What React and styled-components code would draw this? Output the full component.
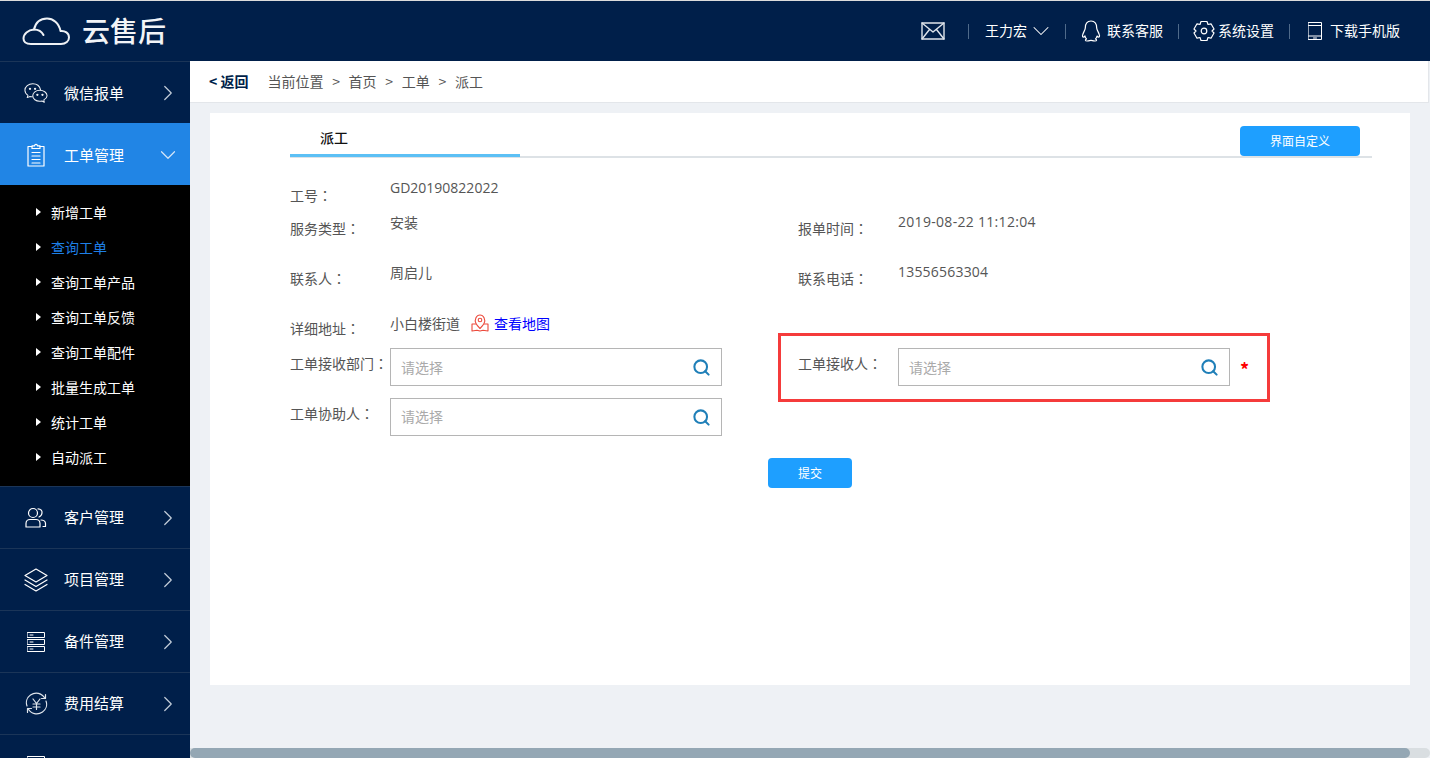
import React from "react";
import styled, { createGlobalStyle } from "styled-components";
import { ChevronDown, ChevronRight, Search } from "lucide-react";

const GlobalStyle = createGlobalStyle`
  html, body, #root { margin: 0; padding: 0; height: 100%; overflow: hidden; }
  body {
    font-family: "Noto Sans CJK SC", "Liberation Sans", sans-serif;
    font-size: 14px;
    color: #555;
  }
  * { box-sizing: border-box; }
`;

const Page = styled.div`
  height: 758px;
  border-top: 1px solid #dcdcdc;
  display: flex;
  flex-direction: column;
  background: #eef1f5;
  overflow: hidden;
`;

/* top bar */
const Header = styled.header`
  height: 60px;
  flex: none;
  background: #001f4a;
  display: flex;
  align-items: center;
  justify-content: space-between;
  padding: 0 30px 0 22px;
  color: #fff;
`;

const Logo = styled.div`
  display: flex;
  align-items: center;
  gap: 12px;
`;

const LogoText = styled.span`
  font-size: 28px;
  font-weight: 500;
  line-height: 32px;
  margin-bottom: 2px;
  color: #f2f4f7;
`;

const HeaderTools = styled.div`
  display: flex;
  align-items: center;
`;

const Tool = styled.span`
  display: flex;
  align-items: center;
  gap: ${(p) => p.$gap || 0}px;
`;

const ToolText = styled.span`
  line-height: 20px;
  margin-bottom: 2px;
`;

const Divider = styled.i`
  width: 1px;
  height: 15px;
  margin: 0 ${(p) => p.$right || 16}px 0 ${(p) => p.$left || 16}px;
  background: #4f6a8a;
`;

/* page body */
const Body = styled.div`
  flex: 1;
  min-height: 0;
  display: flex;
`;

const Sidebar = styled.nav`
  width: 190px;
  flex: none;
  background: #001f4a;
  overflow: hidden;
`;

const NavItem = styled.div`
  height: 62px;
  display: flex;
  align-items: center;
  padding: 0 9px 0 24px;
  background: ${(p) => (p.$active ? "#2185e5" : "#001f4a")};
  border-top: 1px solid ${(p) => (p.$active ? "#2185e5" : "#1b3558")};
  color: #fff;
  font-size: 15px;
`;

const NavIcon = styled.span`
  width: 24px;
  height: 26px;
  display: flex;
  align-items: center;
  justify-content: center;
  margin-right: 16px;
`;

const NavLabel = styled.span`
  flex: 1;
  margin-bottom: ${(p) => (p.$raised ? 2 : 0)}px;
`;

const SubMenu = styled.ul`
  list-style: none;
  margin: 0;
  padding: 9px 0 12px;
  background: #000;
`;

const SubItem = styled.li`
  height: 35px;
  display: flex;
  align-items: center;
  padding-left: 36px;
  color: ${(p) => (p.$active ? "#1e7fe6" : "#fff")};
  &::before {
    content: "";
    margin-right: 10px;
    border-left: 5px solid #fff;
    border-top: 4px solid transparent;
    border-bottom: 4px solid transparent;
  }
`;

const Main = styled.main`
  flex: 1;
  min-width: 0;
  display: flex;
  flex-direction: column;
`;

const Crumbs = styled.div`
  height: 42px;
  flex: none;
  margin-right: 1px;
  display: flex;
  align-items: center;
  padding: 0 0 2px 19px;
  background: #fff;
  border-bottom: 1px solid #e3e6ea;
  border-right: 1px solid #e3e6ea;
  line-height: 20px;
`;

const Back = styled.a`
  color: #001f4a;
  font-size: 14px;
  font-weight: 700;
  margin-right: 19px;
`;

const CrumbSep = styled.span`
  margin: 0 8.7px;
  color: #555;
`;

const Content = styled.div`
  flex: 1;
  min-height: 0;
  padding: 10px 20px 0;
`;

const Card = styled.section`
  height: 572px;
  background: #fff;
  padding-top: 13px;
`;

const TabBar = styled.div`
  margin-left: 80px;
  width: 1082px;
  height: 32px;
  display: flex;
  justify-content: space-between;
  border-bottom: 2px solid #dde2e6;
`;

const Tab = styled.div`
  width: 230px;
  height: 31px;
  padding-left: 30px;
  line-height: 22px;
  color: #111;
  font-weight: 500;
  border-bottom: 3px solid #5cc0f5;
`;

const BlueButton = styled.button`
  height: 30px;
  width: ${(p) => p.$width}px;
  margin-right: ${(p) => p.$right || 0}px;
  padding: 0 0 2px;
  border: none;
  border-radius: 4px;
  background: #1e9fff;
  color: #fff;
  font-family: inherit;
  font-size: 12px;
`;

const Form = styled.div`
  margin: 21px 0 0 80px;
`;

const Row = styled.div`
  height: ${(p) => p.$height}px;
  display: grid;
  grid-template-columns: 508px 508px;
`;

const Field = styled.div`
  position: relative;
  display: flex;
  align-items: flex-start;
  line-height: 20px;
`;

const Label = styled.span`
  width: 100px;
  flex: none;
  padding-top: ${(p) => p.$top ?? 5}px;
  white-space: nowrap;
`;

const Colon = styled.span`
  font-family: "Noto Sans CJK TC", sans-serif;
`;

const Value = styled.span`
  display: flex;
  align-items: center;
  margin-top: -1px;
`;

const NumberValue = styled(Value)`
  font-family: "Open Sans", "Noto Sans CJK SC", sans-serif;
  letter-spacing: ${(p) => p.$spacing}px;
`;

const MapLink = styled.a`
  display: flex;
  align-items: center;
  gap: 5px;
  margin-left: 11px;
  color: #0000ff;
`;

const SelectBox = styled.div`
  width: 332px;
  height: 38px;
  display: flex;
  align-items: center;
  justify-content: space-between;
  padding: 0 10px 0 10px;
  border: 1px solid #b5b5b5;
  color: #aaa;
`;

const Placeholder = styled.span`
  margin-bottom: ${(p) => (p.$high ? 2 : 0)}px;
`;

const Required = styled.span`
  margin: 11px 0 0 10px;
  color: #f00;
  font-size: 18px;
  font-weight: 700;
`;

const Highlight = styled.div`
  position: absolute;
  left: -20px;
  top: -15px;
  width: 492px;
  height: 69px;
  border: 3px solid #f53b3b;
  pointer-events: none;
`;

const Actions = styled.div`
  display: flex;
  justify-content: center;
  margin-top: 22px;
`;

const ScrollTrack = styled.div`
  height: 10px;
  flex: none;
  background: #d9dee1;
  border-radius: 0 5px 5px 0;
`;

const ScrollThumb = styled.div`
  width: 1220px;
  height: 100%;
  border-radius: 5px;
  background: #94a7b4;
`;

/* drawn icons */
const Line = ({ w = 24, h = 24, box, children, color = "#fff", sw = 1.2 }) => (
  <svg
    width={w}
    height={h}
    viewBox={box || `0 0 ${w} ${h}`}
    fill="none"
    stroke={color}
    strokeWidth={sw}
    strokeLinecap="round"
    strokeLinejoin="round"
  >
    {children}
  </svg>
);

const CloudIcon = () => (
  <Line w={48} h={28} color="#eef1f5" sw={2}>
    <path d="M9 27H39C44 27 47 24 47 20.500C47 16 43 13.500 38.500 14C37 6 31 1.500 25 1.500C18 1.500 13.500 6 12 12.500C6 13 1.500 17 1.500 21.500C1.500 25 4 27 9 27Z" />
    <path d="M12 12.500C17 12.500 20 15 21.500 18" />
  </Line>
);

const MailIcon = () => (
  <Line w={24} h={18} color="#dfe5ec" sw={1.4}>
    <rect x="1" y="1" width="22" height="16" />
    <path d="M1 1L12 10L23 1M1 17L8.500 7.500M23 17L15.500 7.500" />
  </Line>
);

const QqIcon = () => (
  <Line w={20} h={22}>
    <path d="M10 1C6 1 4.300 4 4.300 8C4.300 10 2 12.500 1.500 15.500C1.300 17.500 2.500 17.500 4 16C4.300 17.500 5 18.500 5.500 19C4 19.700 4 21 6 21C8 21 9 20.300 10 20.300C11 20.300 12 21 14 21C16 21 16 19.700 14.500 19C15 18.500 15.700 17.500 16 16C17.500 17.500 18.700 17.500 18.500 15.500C18 12.500 15.700 10 15.700 8C15.700 4 14 1 10 1Z" />
  </Line>
);

const GearIcon = () => (
  <Line w={22} h={22}>
    <path d="M8 1.500H14L15 4.500L18 3.800L21 9L19 11L21 13L18 18.200L15 17.500L14 20.500H8L7 17.500L4 18.200L1 13L3 11L1 9L4 3.800L7 4.500Z" />
    <circle cx="11" cy="11" r="2.800" />
  </Line>
);

const TabletIcon = () => (
  <Line w={14} h={18} sw={1}>
    <rect x="0.500" y="0.500" width="13" height="17" />
    <path d="M0.500 3.500H13.500M0.500 14H13.500M5.500 16H8.500" />
  </Line>
);

const WechatIcon = () => (
  <Line w={26} h={22} color="#eef1f5" sw={1.1}>
    <path d="M18 7.500C17 3.500 13.500 1 9.500 1C4.800 1 1 4.200 1 8C1 10.300 2.300 12.200 4.300 13.500L3.500 16L6.500 14.700C7.200 14.900 8 15 9 15" />
    <path d="M17 8C13 8 9.500 10.500 9.500 14C9.500 17.500 13 20 17 20C18 20 18.800 19.800 19.500 19.600L22 21L21.500 18.500C23.500 17.300 25 15.800 25 14C25 10.500 21 8 17 8Z" />
    <circle cx="6.500" cy="6.500" r="0.700" fill="#eef1f5" />
    <circle cx="12" cy="6.500" r="0.700" fill="#eef1f5" />
    <circle cx="14.500" cy="13" r="0.700" fill="#eef1f5" />
    <circle cx="20" cy="13" r="0.700" fill="#eef1f5" />
  </Line>
);

const ClipboardIcon = () => (
  <Line w={18} h={24}>
    <path d="M5 3.500H1V23H17V3.500H13" />
    <path d="M5 5.500V2.800H7.500C7.800 1 10.200 1 10.500 2.800H13V5.500Z" />
    <path d="M5 9.500H13M5 13H13M5 16.500H13M5 20H13" />
  </Line>
);

const UsersIcon = () => (
  <Line w={22} h={21}>
    <circle cx="8" cy="6" r="4.500" />
    <path d="M1 20V16.500C1 14 3 12.500 5 12.500H11C13 12.500 15 14 15 16.500V20Z" />
    <path d="M13 1.800C16 1.800 17.300 4 17 6C16.800 8 15.500 9.500 14 10M16 13C18.500 13 20.500 14.500 20.500 16.500V19.500H18" />
  </Line>
);

const LayersIcon = () => (
  <Line w={24} h={24}>
    <path d="M12 1L23 7.500L12 14L1 7.500Z" />
    <path d="M1 12L12 18.500L23 12" />
    <path d="M1 16.500L12 23L23 16.500" />
  </Line>
);

const ServerIcon = () => (
  <Line w={18} h={20} sw={1}>
    <rect x="0.500" y="0.500" width="17" height="5" />
    <rect x="0.500" y="7.500" width="17" height="5" />
    <rect x="0.500" y="14.500" width="17" height="5" />
    <path d="M3 3H6M3 10H6M3 17H6" />
  </Line>
);

const YenIcon = () => (
  <Line w={23} h={23} color="#dfe5ec">
    <path d="M20 6.500C17 1 10.500 -0.500 5.500 3C2 5.500 0.500 10 2 14" />
    <path d="M3 16.500C6 22 12.500 23.500 17.500 20C21 17.500 22.500 13 21 9" />
    <path d="M20.500 2.500V6.500H16.500M2.500 20.500V16.500H6.500" />
    <path d="M8 7L11.500 11.500L15 7M11.500 11.500V17.500M8 12H15M8 15H15" />
  </Line>
);

const MapPinIcon = () => (
  <Line w={18} h={18} color="#ec4a3c" sw={1.1}>
    <path d="M5 9.500C6 11.500 8 13.500 9 14.500C10 13.500 12 11.500 13 9.500C15 5.500 12.500 1 9 1C5.500 1 3 5.500 5 9.500Z" />
    <circle cx="9" cy="6" r="1.800" />
    <path d="M4.500 10H1V17L6 16.200L9 17L12 16.200L17 17V10H13.500" />
  </Line>
);

const navTop = [{ icon: <WechatIcon />, label: "微信报单" }];

const navBottom = [
  { icon: <UsersIcon />, label: "客户管理" },
  { icon: <LayersIcon />, label: "项目管理" },
  { icon: <ServerIcon />, label: "备件管理" },
  { icon: <YenIcon />, label: "费用结算" },
  { icon: <ServerIcon /> },
];

const subItems = [
  "新增工单",
  "查询工单",
  "查询工单产品",
  "查询工单反馈",
  "查询工单配件",
  "批量生成工单",
  "统计工单",
  "自动派工",
];

const Nav = ({ icon, label, active, raised }) => (
  <NavItem $active={active}>
    <NavIcon>{icon}</NavIcon>
    <NavLabel $raised={raised}>{label}</NavLabel>
    {active ? (
      <ChevronDown size={26} strokeWidth={1.1} color="#d5e6f8" />
    ) : (
      <ChevronRight size={26} strokeWidth={1.1} color="#c3ceda" />
    )}
  </NavItem>
);

const FieldLabel = ({ children, top }) => (
  <Label $top={top}>
    {children}
    <Colon>：</Colon>
  </Label>
);

const SelectField = ({ high }) => (
  <SelectBox>
    <Placeholder $high={high}>请选择</Placeholder>
    <Search size={19} strokeWidth={2.6} color="#1f7fb8" />
  </SelectBox>
);

const App = () => {
  return (
    <>
      <GlobalStyle />
      <Page>
        <Header>
          <Logo>
            <CloudIcon />
            <LogoText>云售后</LogoText>
          </Logo>
          <HeaderTools>
            <MailIcon />
            <Divider $left={23} />
            <Tool>
              <ToolText>王力宏</ToolText>
              <ChevronDown size={28} strokeWidth={0.9} />
            </Tool>
            <Divider $left={10} $right={15} />
            <Tool $gap={6}>
              <QqIcon />
              <ToolText>联系客服</ToolText>
            </Tool>
            <Divider $left={15} $right={14} />
            <Tool $gap={3}>
              <GearIcon />
              <ToolText>系统设置</ToolText>
            </Tool>
            <Divider $left={15} $right={18} />
            <Tool $gap={8}>
              <TabletIcon />
              <ToolText>下载手机版</ToolText>
            </Tool>
          </HeaderTools>
        </Header>
        <Body>
          <Sidebar>
            {navTop.map((item) => (
              <Nav key={item.label} {...item} />
            ))}
            <Nav icon={<ClipboardIcon />} label="工单管理" active />
            <SubMenu>
              {subItems.map((item) => (
                <SubItem key={item} $active={item === "查询工单"}>
                  {item}
                </SubItem>
              ))}
            </SubMenu>
            {navBottom.map((item, index) => (
              <Nav key={index} {...item} raised />
            ))}
          </Sidebar>
          <Main>
            <Crumbs>
              <Back>&lt; 返回</Back>
              当前位置
              <CrumbSep>&gt;</CrumbSep>
              首页
              <CrumbSep>&gt;</CrumbSep>
              工单
              <CrumbSep>&gt;</CrumbSep>
              派工
            </Crumbs>
            <Content>
              <Card>
                <TabBar>
                  <Tab>派工</Tab>
                  <BlueButton $width={120} $right={12}>
                    界面自定义
                  </BlueButton>
                </TabBar>
                <Form>
                  <Row $height={34}>
                    <Field>
                      <FieldLabel top={6}>工号</FieldLabel>
                      <NumberValue $spacing={0}>GD20190822022</NumberValue>
                    </Field>
                  </Row>
                  <Row $height={50}>
                    <Field>
                      <FieldLabel>服务类型</FieldLabel>
                      <Value>安装</Value>
                    </Field>
                    <Field>
                      <FieldLabel>报单时间</FieldLabel>
                      <NumberValue $spacing={0.3}>2019-08-22 11:12:04</NumberValue>
                    </Field>
                  </Row>
                  <Row $height={51}>
                    <Field>
                      <FieldLabel>联系人</FieldLabel>
                      <Value>周启儿</Value>
                    </Field>
                    <Field>
                      <FieldLabel>联系电话</FieldLabel>
                      <NumberValue $spacing={0.2}>13556563304</NumberValue>
                    </Field>
                  </Row>
                  <Row $height={34}>
                    <Field>
                      <FieldLabel top={4}>详细地址</FieldLabel>
                      <Value>
                        小白楼街道
                        <MapLink>
                          <MapPinIcon />
                          查看地图
                        </MapLink>
                      </Value>
                    </Field>
                  </Row>
                  <Row $height={50}>
                    <Field>
                      <FieldLabel>工单接收部门</FieldLabel>
                      <SelectField />
                    </Field>
                    <Field>
                      <FieldLabel>工单接收人</FieldLabel>
                      <SelectField />
                      <Required>*</Required>
                      <Highlight />
                    </Field>
                  </Row>
                  <Row $height={38}>
                    <Field>
                      <FieldLabel>工单协助人</FieldLabel>
                      <SelectField high />
                    </Field>
                  </Row>
                </Form>
                <Actions>
                  <BlueButton $width={84}>提交</BlueButton>
                </Actions>
              </Card>
            </Content>
            <ScrollTrack>
              <ScrollThumb />
            </ScrollTrack>
          </Main>
        </Body>
      </Page>
    </>
  );
};

export default App;
